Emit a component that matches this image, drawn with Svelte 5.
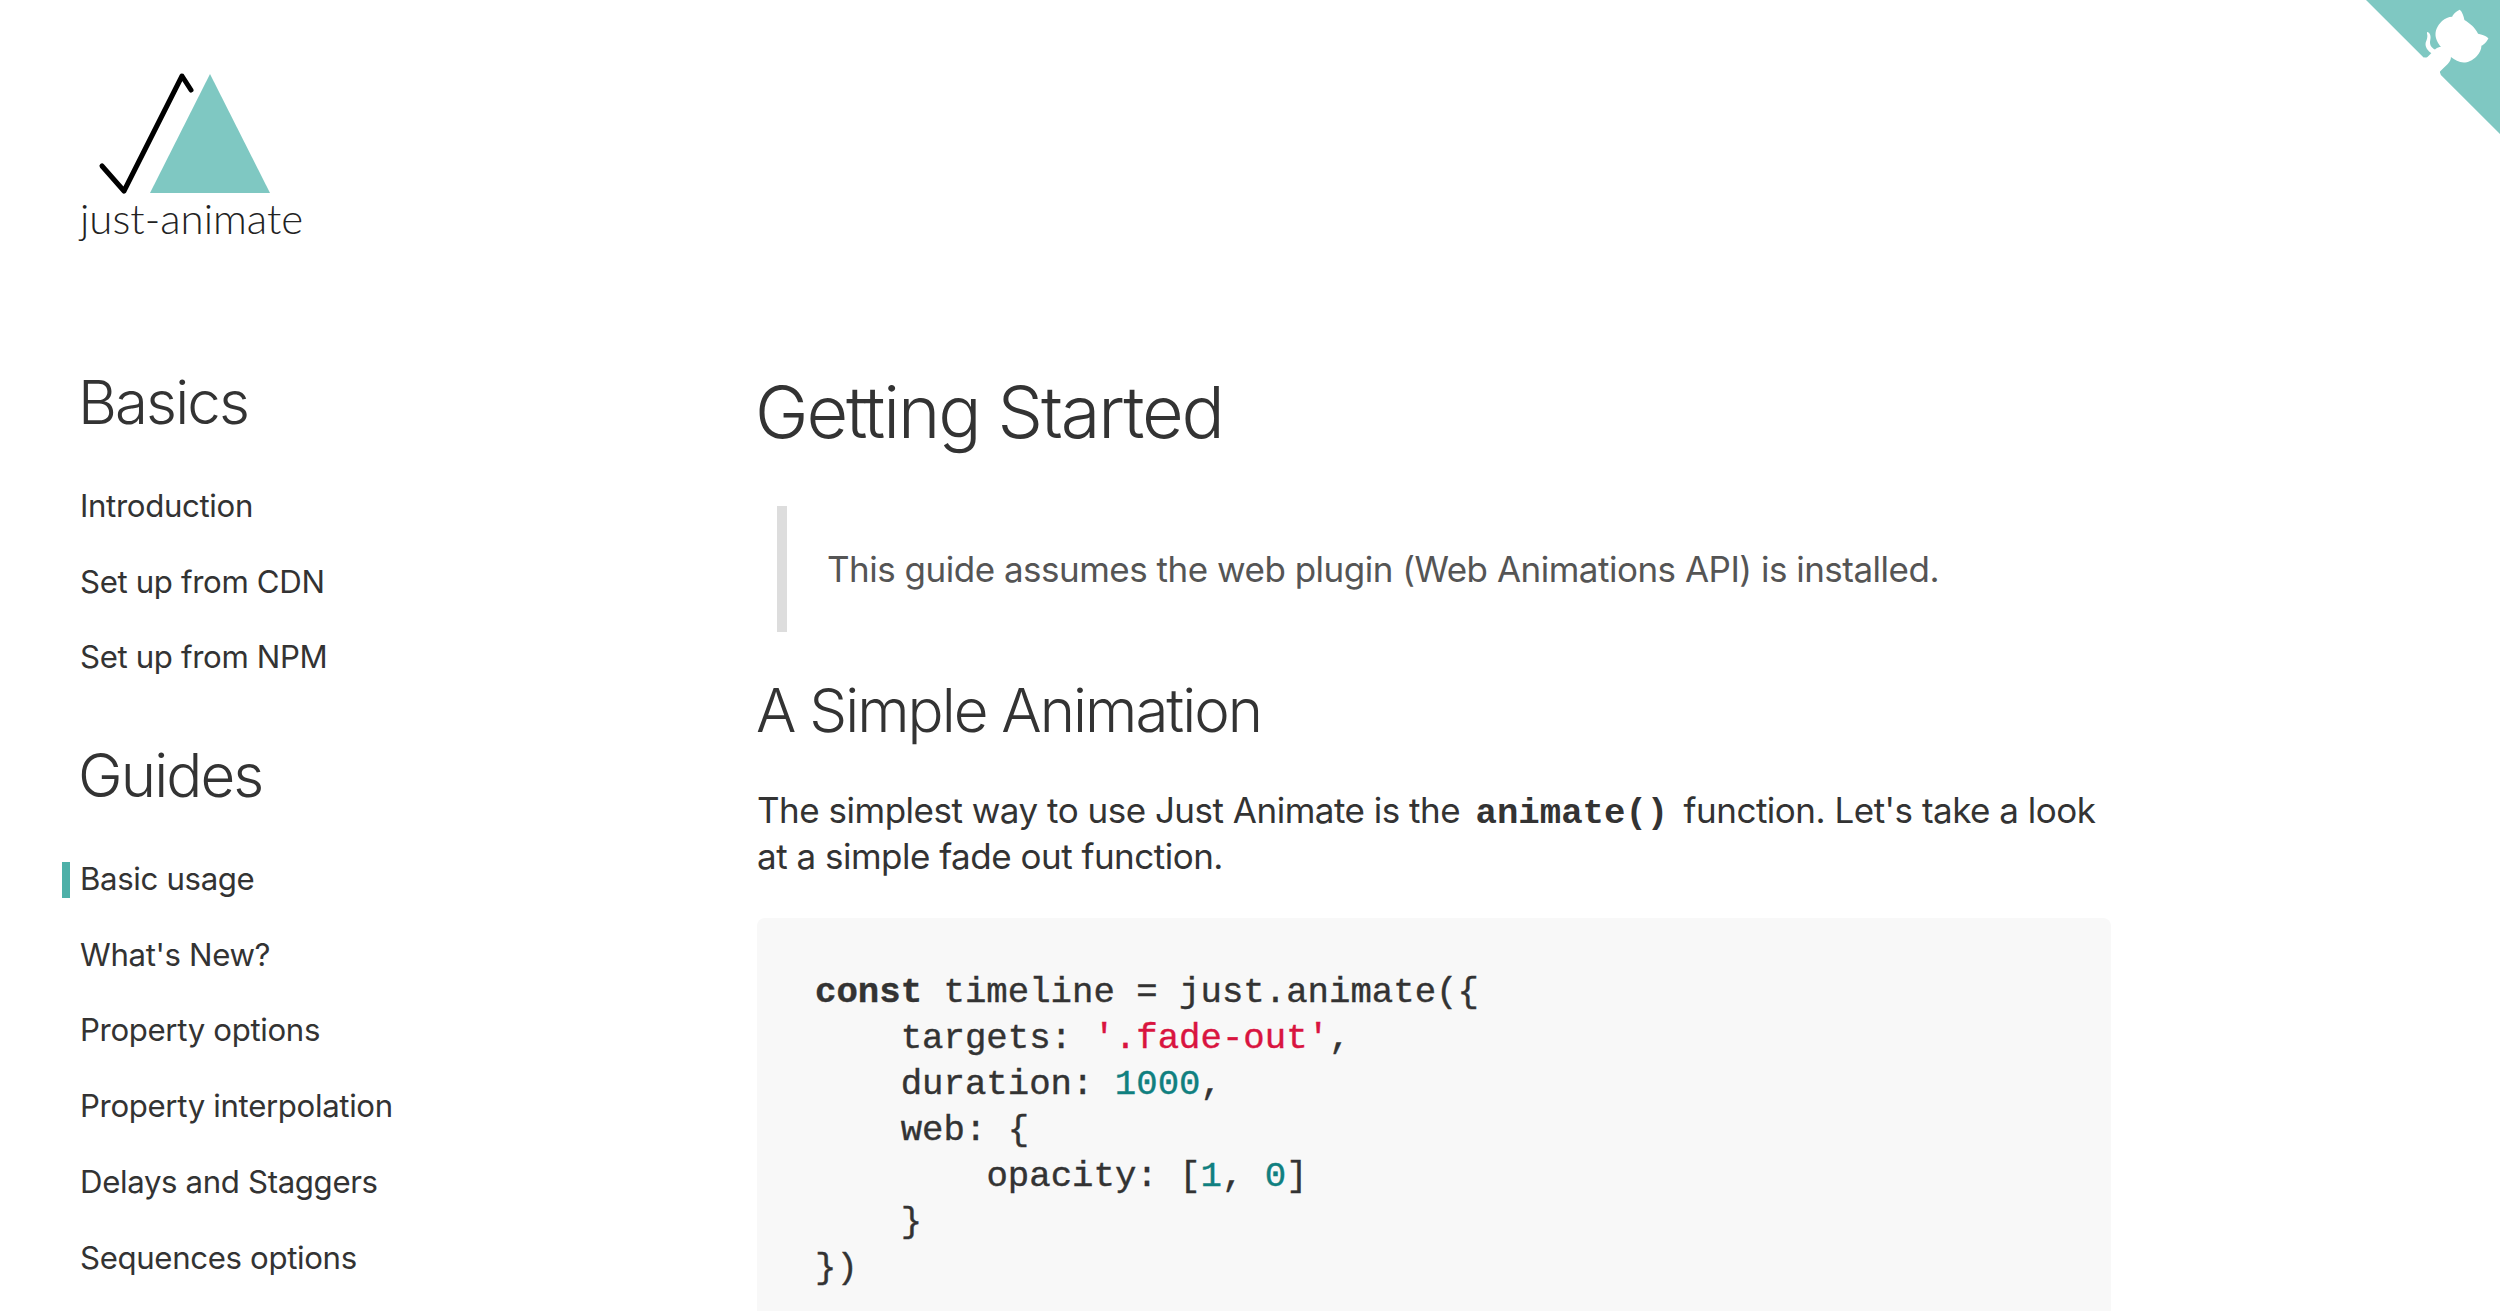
<script>
  const basics = ['Introduction', 'Set up from CDN', 'Set up from NPM'];
  const guides = ['Basic usage', "What's New?", 'Property options', 'Property interpolation', 'Delays and Staggers', 'Sequences options'];
</script>

<div class="page">
  <a class="corner" href="#top" aria-label="View source on GitHub">
    <svg width="160" height="160" viewBox="0 0 250 250">
      <path class="tri" d="M0,0 L115,115 L130,115 L142,142 L250,250 L250,0 Z" />
      <path class="cat" d="M128.3,109.0 C113.8,99.7 119.0,89.6 119.0,89.6 C122.0,82.7 120.5,78.6 120.5,78.6 C119.2,72.0 123.4,76.3 123.4,76.3 C127.3,80.9 125.5,87.3 125.5,87.3 C122.9,97.6 130.6,101.9 134.4,103.2" />
      <path class="cat" d="M115.0,115.0 C114.9,115.1 118.7,116.5 119.8,115.4 L133.7,101.6 C136.9,99.2 139.9,98.4 142.2,98.6 C133.8,88.0 127.5,74.4 143.8,58.0 C148.5,53.4 154.0,51.2 159.7,51.0 C160.3,49.4 163.2,43.6 171.4,40.1 C171.4,40.1 176.1,42.5 178.8,56.2 C183.1,58.6 187.2,61.8 190.9,65.4 C194.5,69.0 197.7,73.2 200.1,77.6 C213.8,80.2 216.3,84.9 216.3,84.9 C212.7,93.1 206.9,96.0 205.4,96.6 C205.1,102.4 203.0,107.8 198.3,112.5 C181.9,128.9 168.3,122.5 157.7,114.1 C157.9,116.9 156.7,120.9 152.7,124.9 L141.0,136.5 C139.8,137.7 141.6,141.9 141.8,141.8 Z" />
    </svg>
  </a>

  <aside class="side">
    <div class="logo">
      <svg width="240" height="130" viewBox="80 70 240 130">
        <polygon points="210,74 150,193 270,193" fill="#7fc8c2" />
        <polyline points="102,166 124,191 182,76 191,90" fill="none" stroke="#000" stroke-width="5" stroke-linecap="round" stroke-linejoin="round" />
      </svg>
      <div class="logo-text">just-animate</div>
    </div>
    <h2>Basics</h2>
    <ul>
      {#each basics as item}<li>{item}</li>{/each}
    </ul>
    <h2 class="second">Guides</h2>
    <ul>
      {#each guides as item, i}<li class:active={i === 0}>{item}</li>{/each}
    </ul>
  </aside>

  <main class="main">
    <h1>Getting Started</h1>
    <blockquote>This guide assumes the web plugin (Web Animations API) is installed.</blockquote>
    <h3>A Simple Animation</h3>
    <p>The simplest way to use Just Animate is the <code>animate()</code> function. Let's take a look<br />at a simple fade out function.</p>
    <div class="code">
      <div class="line"><b>const</b> timeline = just.animate(&#123;</div>
      <div class="line i1">targets: <span class="str">'.fade-out'</span>,</div>
      <div class="line i1">duration: <span class="num">1000</span>,</div>
      <div class="line i1">web: &#123;</div>
      <div class="line i2">opacity: [<span class="num">1</span>, <span class="num">0</span>]</div>
      <div class="line i1">&#125;</div>
      <div class="line">&#125;)</div>
    </div>
  </main>
</div>

<style>
  :global(html), :global(body) { margin: 0; background: #fff; }
  .page {
    position: relative;
    display: flex;
    width: 2500px;
    height: 1311px;
    overflow: hidden;
    font-family: Inter, "Liberation Sans", Arial, sans-serif;
    color: #333;
  }
  .corner { position: absolute; top: -16px; right: -10px; display: block; }
  .corner svg { display: block; }
  .tri { fill: #7fc8c2; }
  .cat { fill: #fff; }

  .side { width: 757px; flex: none; padding-left: 80px; box-sizing: border-box; }
  .logo { padding-top: 70px; height: 362px; box-sizing: border-box; }
  .logo svg { display: block; }
  .logo-text {
    font-family: Lato, sans-serif;
    font-weight: 300;
    font-size: 42px;
    line-height: 40px;
    color: #222;
    margin-top: -2px;
  }
  h2 {
    margin: 0 0 0 -2px;
    font-weight: 300;
    font-size: 60px;
    letter-spacing: -1.9px;
    line-height: 80px;
    color: #333;
  }
  h2.second { margin-top: 39px; }
  ul { list-style: none; margin: 27px 0 0; padding: 0; }
  li {
    position: relative;
    height: 75.7px;
    line-height: 75.7px;
    font-size: 31.2px;
    letter-spacing: -0.35px;
    color: #333;
  }
  li.active::before {
    content: "";
    position: absolute;
    left: -18px;
    top: 20px;
    width: 8px;
    height: 36px;
    background: #4db0a8;
  }

  .main { width: 1354px; flex: none; padding-top: 367px; }
  h1 {
    margin: 0 0 0 -2px;
    font-weight: 300;
    font-size: 72px;
    letter-spacing: -2.1px;
    line-height: 90px;
    color: #333;
  }
  blockquote {
    margin: 49px 0 0 20px;
    border-left: 10px solid #ddd;
    padding: 0 0 0 40px;
    height: 126px;
    line-height: 126px;
    font-size: 35px;
    letter-spacing: -0.5px;
    color: #555;
  }
  h3 {
    margin: 38px 0 0 -1px;
    font-weight: 300;
    font-size: 60px;
    letter-spacing: -2px;
    line-height: 80px;
    color: #333;
  }
  p {
    margin: 37px 0 0;
    font-size: 35px;
    letter-spacing: -0.5px;
    line-height: 46px;
    color: #333;
  }
  code {
    font-family: "Liberation Mono", monospace;
    font-weight: 700;
    font-size: 35.7px;
    letter-spacing: 0;
    line-height: 0;
    margin: 0 6px;
  }
  .code {
    margin: 39px 0 0;
    padding: 52px 58px;
    background: #f8f8f8;
    border-radius: 8px;
    font-family: "Liberation Mono", monospace;
    font-size: 35.7px;
    line-height: 46px;
    color: #333;
    -webkit-text-stroke: 0.4px currentColor;
  }
  .line { height: 46px; white-space: pre; }
  .i1 { padding-left: 85.7px; }
  .i2 { padding-left: 171.4px; }
  .str { color: #d9143f; }
  .num { color: #108080; }
</style>
